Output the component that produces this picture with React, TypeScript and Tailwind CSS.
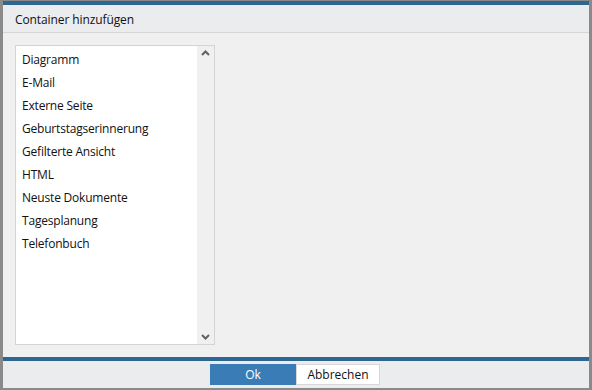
import React from "react";

const items = [
  "Diagramm",
  "E-Mail",
  "Externe Seite",
  "Geburtstagserinnerung",
  "Gefilterte Ansicht",
  "HTML",
  "Neuste Dokumente",
  "Tagesplanung",
  "Telefonbuch",
];

export default function App() {
  return (
    <div
      className="w-[592px] h-[390px] bg-[#8a8a8a] pl-[3px] pr-[3px] pt-[1px] pb-[2px] flex"
      style={{ fontFamily: '"Open Sans", "Noto Sans", sans-serif' }}
    >
      <div className="flex-1 flex flex-col bg-[#f0f0f0]">
        <div className="h-[4px] bg-[#2d6690]" />
        <div className="h-[28px] bg-[#ebecee] border-b border-[#d6d6d6] flex items-center pl-[12px] pt-[3px] text-[12px] tracking-[-0.1px] text-[#111]">
          Container hinzufügen
        </div>
        <div className="flex-1 pl-[12px] pt-[12px] pb-[12px]">
          <div className="w-[200px] h-[300px] bg-white border border-[#d4d4d4] flex">
            <div className="flex-1 pt-[2px] pl-[6px] text-[12px] tracking-[-0.2px] text-[#111]">
              {items.map((it) => (
                <div key={it} className="h-[23px] flex items-center">
                  {it}
                </div>
              ))}
            </div>
            <div className="w-[17px] bg-[#f0f0f0] flex flex-col justify-between items-center py-[4px]">
              <svg width="9" height="6" viewBox="0 0 9 6">
                <path d="M1 5 L4.5 1.5 L8 5" stroke="#606060" strokeWidth="2" fill="none" />
              </svg>
              <svg width="9" height="6" viewBox="0 0 9 6">
                <path d="M1 1 L4.5 4.5 L8 1" stroke="#606060" strokeWidth="2" fill="none" />
              </svg>
            </div>
          </div>
        </div>
        <div className="h-[4px] bg-[#2d6690]" />
        <div className="h-[27px] bg-[#ebecee] flex items-center justify-center">
          <div className="flex mr-[2px]">
            <button className="w-[86px] h-[21px] bg-[#3a7db6] text-white text-[12px]">Ok</button>
            <button className="w-[84px] h-[21px] bg-white border border-[#d8d8d8] text-[#111] text-[12px]">
              Abbrechen
            </button>
          </div>
        </div>
      </div>
    </div>
  );
}
